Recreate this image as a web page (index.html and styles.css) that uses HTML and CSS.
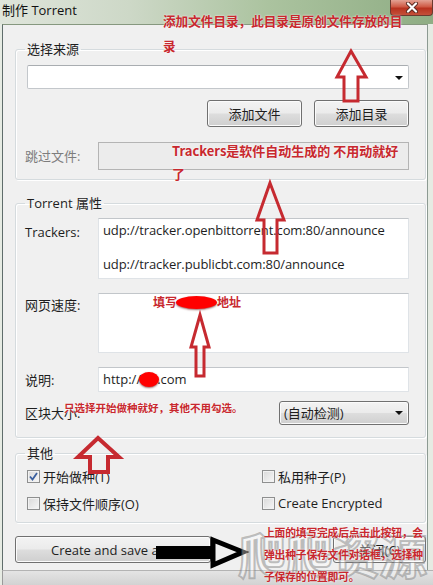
FILE: index.html
```html
<!DOCTYPE html>
<html>
    <head>
        <meta charset="utf-8">
        <title>制作 Torrent</title>
        <link rel="stylesheet" href="styles.css">
    </head>
    <body>
        <div class="window">
            <div class="titlebar">
                <span class="title">制作 Torrent</span>
                <div class="close">
                    <svg width="14" height="11" viewBox="0 0 14 11">
                        <path d="M3 1.5 L11 9.5 M11 1.5 L3 9.5" stroke="#5a2a22" stroke-width="4" stroke-linecap="round"/>
                        <path d="M3 1.5 L11 9.5 M11 1.5 L3 9.5" stroke="#fff" stroke-width="2.2" stroke-linecap="round"/>
                    </svg>
                </div>
            </div>

            <div class="client">
                <fieldset class="group group-source">
                    <legend>选择来源</legend>
                    <div class="combo"><span class="drop"></span></div>
                    <div class="btn-row">
                        <button class="btn btn-add">添加文件</button>
                        <button class="btn btn-add">添加目录</button>
                    </div>
                    <div class="row row-skip">
                        <label class="lbl lbl-disabled">跳过文件:</label>
                        <div class="field field-disabled"></div>
                    </div>
                </fieldset><!-- end source -->

                <fieldset class="group group-props">
                    <legend>Torrent 属性</legend>
                    <div class="row row-top">
                        <label class="lbl lbl-trackers">Trackers:</label>
                        <div class="field area area-trackers">udp://tracker.openbittorrent.com:80/announce<br><br>udp://tracker.publicbt.com:80/announce</div>
                    </div>
                    <div class="row row-top row-web">
                        <label class="lbl lbl-web">网页速度:</label>
                        <div class="field area area-web"></div>
                    </div>
                    <div class="row row-note">
                        <label class="lbl">说明:</label>
                        <div class="field field-note">http://<span class="blob blob-url"></span>.com</div>
                    </div>
                    <div class="row row-size">
                        <label class="lbl">区块大小:</label>
                        <div class="select">(自动检测)<span class="drop"></span></div>
                    </div>
                </fieldset><!-- end props -->

                <fieldset class="group group-other">
                    <legend>其他</legend>
                    <div class="checks">
                        <div class="chk"><span class="box checked"><svg width="9" height="9" viewBox="0 0 9 9"><path d="M1 4.5 L3.5 7.5 L8 1" fill="none" stroke="#3a5f9e" stroke-width="1.8"/></svg></span>开始做种(T)</div>
                        <div class="chk"><span class="box"></span>私用种子(P)</div>
                        <div class="chk"><span class="box"></span>保持文件顺序(O)</div>
                        <div class="chk"><span class="box"></span>Create Encrypted</div>
                    </div>
                </fieldset><!-- end other -->

                <div class="actions">
                    <button class="btn btn-create">Create and save as...</button>
                    <button class="btn btn-close">关闭(C)</button>
                </div>
            </div><!-- end client -->

            <div class="statusbar"></div>

            <!-- annotations drawn over the dialog -->
            <svg class="marks" width="433" height="585" viewBox="0 0 433 585">
                <g fill="none" stroke="#c62a30" stroke-width="3" stroke-linejoin="miter">
                    <polygon points="351,51 366,77 358,77 358,101 344,101 344,77 337,77"/>
                    <polygon points="270,183 284,220 277,220 277,253 264,253 264,220 257,220"/>
                    <polygon points="200,315 209,347 204,347 204,376 196,376 196,347 191,347"/>
                </g>
                <polygon points="98,438 119,457 108,457 108,472 90,472 90,457 78,457" fill="none" stroke="#c62a30" stroke-width="4"/>
                <rect x="156" y="546" width="58" height="13" fill="#000"/>
                <polygon points="213,540 243,552 213,565" fill="none" stroke="#000" stroke-width="5" stroke-linejoin="miter"/>
            </svg>

            <div class="note note-dir">添加文件目录，此目录是原创文件存放的目<br>录</div>
            <div class="note note-trackers">Trackers是软件自动生成的 不用动就好<br>了</div>
            <div class="note note-web">填写<span class="blob blob-web"></span>地址</div>
            <div class="note note-check">只选择开始做种就好，其他不用勾选。</div>
            <div class="watermark">爬爬资源</div>
            <div class="note note-save">上面的填写完成后点击此按钮，会<br>弹出种子保存文件对话框，选择种<br>子保存的位置即可。</div>
        </div> <!-- end window -->
    </body>
</html>
```

FILE: styles.css
```css
*{
    box-sizing: border-box;
}

body{
    margin: 0;
    background-color: #f0f0f0;
    font-family: "Open Sans", "Noto Sans CJK SC", sans-serif;
    font-size: 13px;
    color: #1e1e1e;
}

.window{
    position: relative;
    width: 433px;
    height: 585px;
    overflow: hidden;
    background-color: #e6ebe3;
}

.titlebar{
    height: 24px;
    display: flex;
    align-items: flex-start;
    background: linear-gradient(to right, #dfe5db 0%, #cdd8c7 30%, #abc39f 62%, #8fad84 100%);
}

.title{
    padding: 2px 0 0 2px;
    line-height: 17px;
    font-size: 13px;
    color: #111;
}

.close{
    margin-left: auto;
    width: 43px;
    height: 16px;
    display: flex;
    align-items: center;
    justify-content: center;
    border: 1px solid #6b3a30;
    border-top: none;
    border-radius: 0 0 4px 4px;
    background: linear-gradient(#e3a294 0%, #cf5a45 45%, #b8321f 55%, #c4503a 100%);
}

.client{
    margin-left: 2px;
    width: 426px;
    height: 546px;
    padding-top: 16px;
    background-color: #f0f0f0;
    border-left: 1px solid #5f6d6b;
    border-right: 1px solid #8c9a92;
    border-top: 1px solid #86987f;
}

.group{
    width: 411px;
    margin: 0 0 0 12px;
    padding: 8px 16px 9px 9px;
    border: 1px solid #d5dbde;
    border-radius: 3px;
    box-shadow: inset 1px 1px 0 #fff, 1px 1px 0 #fff;
    min-width: 0;
}

.group legend{
    padding: 0 2px;
    line-height: 16px;
    font-size: 13px;
}

.group-props{
    margin-top: 15px;
    padding: 7px 16px 12px 9px;
}

.group-other{
    margin-top: 7px;
    padding: 4px 16px 8px 9px;
}

/* controls */

.combo{
    position: relative;
    margin-left: 2px;
    height: 24px;
    background-color: #fff;
    border: 1px solid #c3c7cb;
    border-top-color: #a9adb1;
    border-radius: 2px;
}

.drop{
    position: absolute;
    right: 5px;
    top: 10px;
    border-left: 4px solid transparent;
    border-right: 4px solid transparent;
    border-top: 4px solid #111;
}

.btn-row{
    display: flex;
    justify-content: flex-end;
    gap: 12px;
    margin-top: 11px;
}

.btn{
    height: 27px;
    padding: 0;
    font-family: "Open Sans", "Noto Sans CJK SC", sans-serif;
    font-size: 13px;
    color: #1e1e1e;
    border: 1px solid #707070;
    border-radius: 3px;
    background: linear-gradient(#f3f3f3 0%, #ebebeb 48%, #dddddd 52%, #cfcfcf 100%);
    box-shadow: inset 0 0 0 1px #fbfbfb;
}

.btn-add{
    width: 95px;
}

.row{
    display: flex;
    align-items: center;
}

.row-top{
    align-items: flex-start;
}

.row-skip{
    margin-top: 15px;
}

.lbl{
    width: 73px;
    flex-shrink: 0;
    line-height: 16px;
    font-size: 13px;
}

.lbl-disabled{
    color: #7d7d7d;
}

.lbl-trackers{
    padding-top: 6px;
}

.lbl-web{
    padding-top: 4px;
}

.field{
    flex-grow: 1;
    background-color: #fff;
    border: 1px solid #dfe3e7;
    border-top-color: #c2c6ca;
}

.field-disabled{
    height: 28px;
    background-color: #ececec;
    border: 1px solid #b4b4b4;
}

.area{
    padding: 3px 4px;
    line-height: 17px;
    font-size: 13px;
}

.area-trackers{
    height: 61px;
    letter-spacing: -0.1px;
}

.row-web{
    margin-top: 14px;
}

.area-web{
    height: 60px;
}

.row-note{
    margin-top: 14px;
}

.field-note{
    height: 25px;
    padding-left: 4px;
    line-height: 23px;
}

.row-size{
    margin-top: 9px;
}

.select{
    position: relative;
    margin-left: auto;
    width: 130px;
    height: 24px;
    padding-left: 4px;
    line-height: 22px;
    border: 1px solid #707070;
    border-radius: 3px;
    background: linear-gradient(#f3f3f3 0%, #ebebeb 48%, #dddddd 52%, #cfcfcf 100%);
    box-shadow: inset 0 0 0 1px #fbfbfb;
}

.select .drop{
    top: 9px;
}

.blob{
    display: inline-block;
    vertical-align: middle;
    background-color: #f00;
    border-radius: 50%;
    box-shadow: 0 1px 2px rgba(90, 0, 0, .6);
}

.blob-url{
    width: 20px;
    height: 15px;
    margin: -3px -2px 0 -2px;
}

.checks{
    display: grid;
    grid-template-columns: 235px 1fr;
    row-gap: 5px;
    margin-left: 2px;
}

.chk{
    display: flex;
    align-items: center;
    height: 22px;
    font-size: 13px;
}

.box{
    width: 13px;
    height: 13px;
    margin-right: 3px;
    display: flex;
    align-items: center;
    justify-content: center;
    border: 1px solid #8e8f8f;
    background: linear-gradient(135deg, #d9d9d9, #f7f7f7);
    box-shadow: inset 0 0 0 1px #f2f2f2;
}

.actions{
    display: flex;
    margin-top: 13px;
}

.btn-create{
    width: 196px;
    margin-left: 12px;
}

.btn-close{
    width: 93px;
    margin-left: auto;
    margin-right: 1px;
}

.statusbar{
    height: 15px;
    margin-left: 2px;
    border-top: 1px solid #b3b3b3;
    border-left: 1px solid #9a9a9a;
    background: linear-gradient(#e4e4e4, #d2d2d2);
}

/* annotations */

.marks{
    position: absolute;
    left: 0;
    top: 0;
}

.note{
    position: absolute;
    color: #c8282e;
    font-family: "Noto Sans CJK SC", sans-serif;
    font-weight: 700;
    text-shadow: 0 0 2px #fff;
    white-space: nowrap;
}

.note-dir{
    left: 163px;
    top: 8px;
    font-size: 12.6px;
    line-height: 25px;
}

.note-trackers{
    left: 172px;
    top: 139px;
    font-size: 13px;
    line-height: 23px;
}

.note-web{
    left: 153px;
    top: 293px;
    font-size: 12px;
    line-height: 18px;
}

.blob-web{
    width: 41px;
    height: 13px;
    margin: -3px 0 0 -1px;
}

.note-check{
    left: 64px;
    top: 400px;
    font-size: 10.5px;
    line-height: 16px;
}

.note-save{
    left: 264px;
    top: 521px;
    font-size: 10.8px;
    line-height: 22px;
    letter-spacing: -0.2px;
}

.watermark{
    position: absolute;
    left: 238px;
    top: 520px;
    font-family: "Noto Sans CJK SC", sans-serif;
    font-weight: 700;
    font-size: 48px;
    line-height: 66px;
    letter-spacing: -1px;
    color: rgba(255, 255, 255, .35);
    -webkit-text-stroke: 2px rgba(120, 120, 120, .45);
    white-space: nowrap;
}
```
